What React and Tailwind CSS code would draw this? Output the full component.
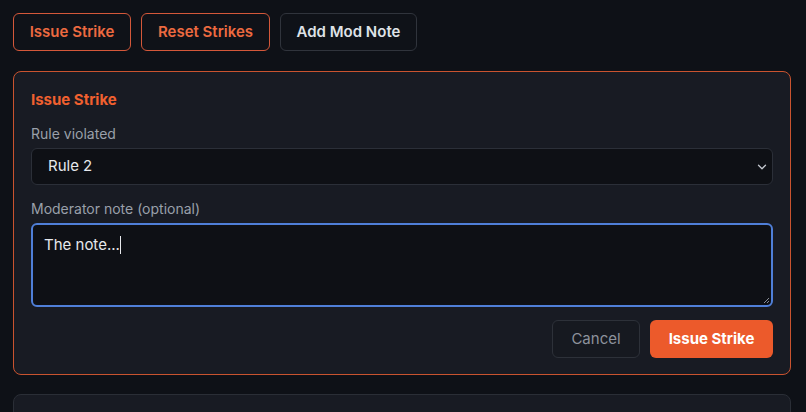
import { ChevronDown } from "lucide-react";

const FONT = { fontFamily: "Inter, 'Noto Sans', sans-serif" };

const TOP_BTN = "h-[38px] px-0 whitespace-nowrap rounded-md border text-[15px] font-semibold bg-[#0f1218]";

export default function App() {
  return (
    <div className="h-screen w-full bg-[#0e1117] px-[13px] pt-[13px] overflow-hidden" style={FONT}>
      {/* Action buttons */}
      <div className="flex gap-[10px]">
        <button className={`${TOP_BTN} w-[118px] border-[#d4583a] text-[#ec6a40]`}>Issue Strike</button>
        <button className={`${TOP_BTN} w-[129px] border-[#d4583a] text-[#ec6a40]`}>Reset Strikes</button>
        <button className={`${TOP_BTN} w-[137px] border-[#30343c] text-[#dfe2e7]`}>Add Mod Note</button>
      </div>

      {/* Strike form */}
      <div className="mt-[20px] w-[778px] rounded-lg border border-[#c9532f] bg-[#181b23] px-[17px] pt-[18px] pb-[16px]">
        <div className="text-[15px] font-bold text-[#f0602f] leading-5">Issue Strike</div>

        <label className="block mt-[14px] text-sm text-[#9aa0aa] leading-5">Rule violated</label>
        <div className="relative mt-[4px] h-[37px] rounded-md border border-[#2b2f38] bg-[#0e1015] flex items-center pl-[16px]">
          <span className="text-[15px] text-[#e6e8ec]">Rule 2</span>
          <ChevronDown className="absolute right-[3px] top-[11px] text-[#c4c8d0]" size={14} strokeWidth={2.2} />
        </div>

        <label className="block mt-[14px] text-sm text-[#9aa0aa] leading-5">Moderator note (optional)</label>
        <div className="mt-[4px] h-[84px] rounded-md border-2 border-[#4f7fd8] bg-[#0e1015] px-[11px] pt-[7px] relative">
          <span className="text-[15px] text-[#e6e8ec]">The note...</span>
          <span className="inline-block w-px h-[18px] bg-[#e6e8ec] align-middle -mt-[2px]" />
          <svg className="absolute right-[1px] bottom-[1px]" width="8" height="8" viewBox="0 0 8 8">
            <path d="M7 2L2 7M7 5L5 7" stroke="#8a8f99" strokeWidth="1" />
          </svg>
        </div>

        <div className="mt-[13px] flex justify-end gap-[10px]">
          <button className="h-[38px] w-[88px] rounded-md border border-[#2d3139] bg-[#161920] text-[15px] text-[#8d929c]">Cancel</button>
          <button className="h-[38px] w-[123px] rounded-md bg-[#ec5a2b] text-[15px] font-bold text-white">Issue Strike</button>
        </div>
      </div>

      {/* Next card */}
      <div className="mt-[19px] w-[778px] h-[40px] rounded-lg border border-[#2a2e36] bg-[#181b23]" />
    </div>
  );
}
